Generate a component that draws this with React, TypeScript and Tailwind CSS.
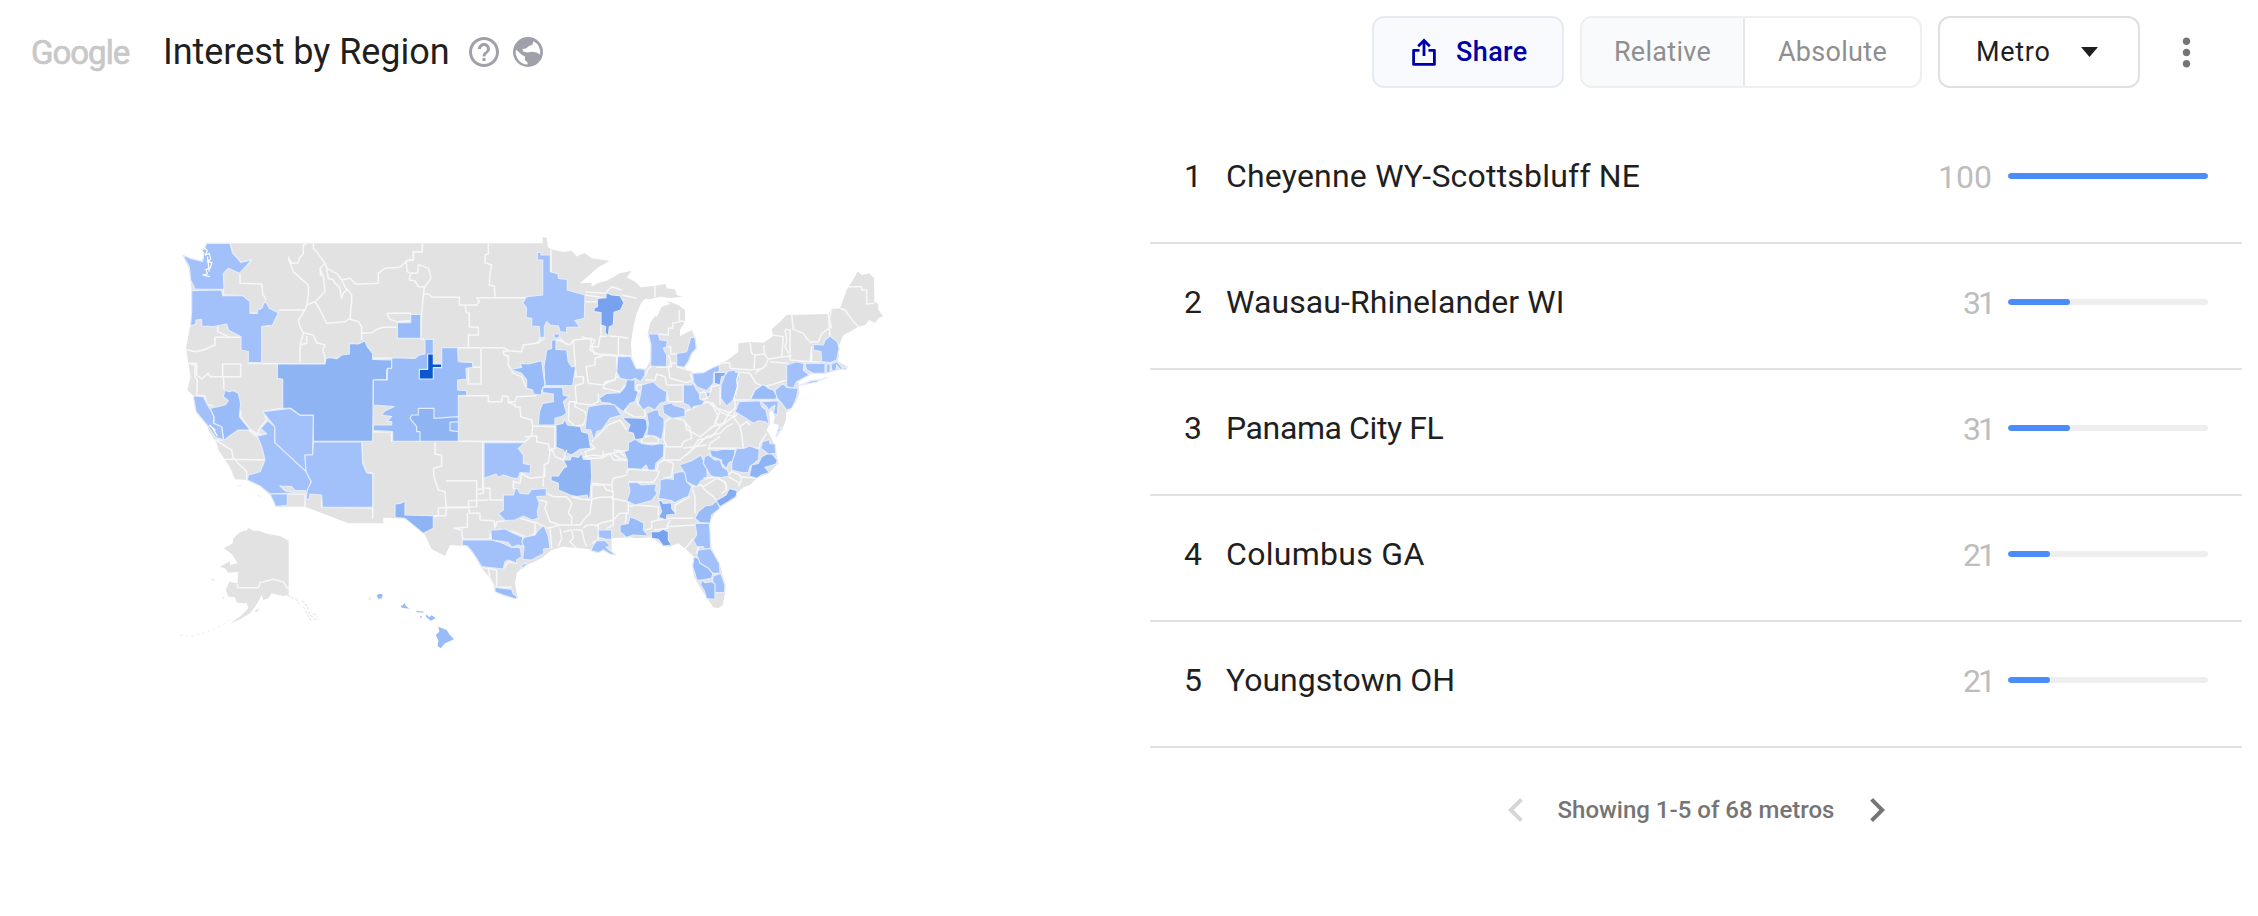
import React from 'react';
import { MdChevronLeft, MdChevronRight, MdHelpOutline, MdMoreVert } from 'react-icons/md';

const regions = [
  { name: 'Cheyenne WY-Scottsbluff NE', value: 100, fit: 'tracking-[0.2px]', valueFit: 'mr-[16px]' },
  { name: 'Wausau-Rhinelander WI', value: 31, fit: 'tracking-[0.08px]', valueFit: 'mr-[15px] tracking-[-3px]' },
  { name: 'Panama City FL', value: 31, fit: 'tracking-[-0.4px]', valueFit: 'mr-[15px] tracking-[-3px]' },
  { name: 'Columbus GA', value: 21, fit: 'tracking-[0.3px]', valueFit: 'mr-[15px] tracking-[-3px]' },
  { name: 'Youngstown OH', value: 21, fit: 'tracking-normal', valueFit: 'mr-[15px] tracking-[-3px]' },
];

const LIGHT = '#a2c0fa';
const MID = '#99bbf7';
const STRONG = '#8fb4f4';
const DEEP = '#85acf2';
const DARK = '#78a2ee';
const TOP = '#0b57d0';

type Sheet = {
  id: string;
  x: number;
  y: number;
  land?: string[];
  borders: string;
  metros: [string, string][];
};

// Each sheet holds one part of the country, with its own origin
const sheets: Sheet[] = [
  {
    id: 'west',
    x: 0,
    y: 0,
    borders:
      'M180 40 188 70 212 97 245 90 225 112 M210 132 210 160 275 162 278 190 288 210 M160 178 160 195 215 197 235 212 240 250 262 250 M355 80 365 100 385 98 388 85 400 70 400 45 410 40 M355 85 370 125 392 145 415 165 415 195 410 225 405 240 385 270 390 290 400 310 390 345 390 398 M325 240 405 240 M275 290 308 285 M430 40 430 55 440 65 465 100 450 115 460 140 465 185 435 215 410 225 M465 100 470 115 500 130 515 150 540 145 558 163 625 160 625 130 645 115 690 112 705 98 715 90 730 90 730 65 757 65 757 40 M515 150 530 180 520 190 515 205 508 170 495 160 490 150 475 145 470 115 M450 115 452 138 M530 175 545 195 545 215 540 265 525 275 470 280 450 240 435 215 M540 268 565 275 575 290 575 310 605 308 620 298 640 292 680 292 M575 310 575 330 M400 308 430 315 440 338 465 345 458 360 465 380 465 402 M410 318 410 340 390 345 M650 250 722 250 722 272 680 275 660 268 650 250 M45 358 75 365 100 360 135 345 135 322 212 322 M75 270 75 285 M95 270 97 288 M143 285 143 305 175 320 M55 400 80 400 80 435 95 447 115 430 120 440 158 440 158 402 212 402 212 440 160 440 162 478 M235 400 465 402 M62 404 75 404 75 440 82 450 80 495 105 498 110 522 130 528 M212 540 212 560 240 598 262 612 290 614 M335 535 280 545 290 570 270 595 262 612 M160 630 185 612 205 600 235 600 262 620 282 660 285 690 165 688 M135 630 160 630 M140 632 185 660 190 685 230 725 230 750 M455 795 455 832 608 834 608 866 M405 795 405 830 M352 792 405 792 M608 605 665 605 665 636 M575 636 578 700 590 728 608 730 608 832',
    metros: [
      [LIGHT, '38,75 60,85 98,94 102,70 96,60 104,56 110,40 180,40 188,70 200,82 212,97 245,90 225,112 208,130 175,115 160,130 162,178 75,178 62,150 58,110'],
      [LIGHT, '65,182 155,180 158,197 218,197 240,215 240,250 262,250 262,240 275,235 285,212 298,235 325,248 308,285 275,290 275,398 235,398 235,365 213,360 213,320 175,300 170,282 130,290 95,288 95,268 78,270 78,282 62,288 65,240'],
      [STRONG, '322,402 465,402 468,385 480,382 500,386 515,375 538,372 538,340 565,342 585,332 592,350 608,370 608,388 665,390 665,415 650,420 650,448 610,450 608,634 430,634 430,556 390,556 362,535 338,535 338,448 322,445'],
      [LIGHT, '278,545 360,535 390,556 430,556 428,675 405,675 408,725 314,638 314,590'],
      [LIGHT, '293,572 314,590 314,638 408,725 424,755 412,790 350,790 300,792 270,768 232,750 235,735 270,725 285,690 275,650 262,618 290,612 272,595'],
      [LIGHT, '300,792 352,792 352,825 318,830'],
      ['#e2e2e2', '330,768 365,770 375,782 408,782 408,790 380,790 345,782'],
      [LIGHT, '430,636 575,636 578,700 590,728 608,732 608,832 457,832 455,795 420,792 418,808 408,808 412,780 424,755 408,725 405,675 428,675'],
      [MID, '165,480 175,485 190,482 205,490 212,520 208,560 240,600 205,600 175,620 162,632 155,590 132,580 132,560 120,535 165,525 175,512 160,500'],
      [LIGHT, '70,498 100,500 110,520 125,545 132,560 130,580 155,590 160,630 135,620 115,590 78,545'],
    ],
  },
  {
    id: 'central',
    x: 600,
    y: 0,
    borders:
      'M157 40 157 65 130 65 130 90 108 92 112 125 122 130 118 150 135 153 145 170 165 170 183 145 175 115 145 103 143 130 122 130 M163 170 160 200 155 250 152 325 M152 328 162 328 M108 388 M10 385 65 385 M160 192 175 192 188 202 268 202 268 225 320 225 328 215 320 203 468 203 M355 40 355 72 345 75 345 98 365 105 360 130 358 165 373 168 375 200 M285 228 290 248 298 250 298 290 325 292 325 315 295 315 295 352 M263 353 330 353 M333 353 333 462 295 462 295 415 M330 412 308 412 M333 353 400 353 418 363 400 363 402 375 415 378 415 405 430 430 455 440 470 475 M415 362 455 365 460 345 508 338 510 322 M265 497 355 497 355 515 395 515 398 497 415 500 415 518 435 525 435 530 450 532 452 560 485 570 488 590 485 618 465 635 265 634 M415 515 435 515 440 500 500 497 M488 588 555 590 555 655 540 660 M465 620 500 618 500 635 535 642 540 665 535 698 522 705 525 742 M545 655 555 680 580 690 M195 636 195 672 215 676 215 708 190 715 192 740 205 780 225 785 228 830 M228 752 320 752 320 830 228 832 M338 636 338 775 M645 215 680 215 M525 325 500 338 M558 328 600 345 610 330 665 325 660 360 690 375 745 378 M570 325 590 345 M608 467 608 440 618 438 615 395 610 330 M612 440 640 440 640 460 615 467 M655 460 700 465 732 448 M655 460 648 410 675 405 675 385 700 378 M615 467 620 520 665 525 685 515 685 490 M597 515 595 570 615 588 640 585 650 560 645 545 615 530 615 515 597 515',
    metros: [
      [MID, '82,278 122,278 122,253 152,253 152,325 82,325'],
      [MID, '10,450 52,450 52,415 65,415 65,383 135,385 148,375 165,372 165,328 190,328 190,400 215,400 215,353 263,353 265,395 308,398 308,412 288,415 290,447 263,450 263,480 290,482 290,495 265,497 265,634 68,634 68,605 10,602 10,585 65,585 65,575 50,575 65,560 35,555 45,542 72,530 10,525'],
      [STRONG, '145,535 192,535 192,565 265,560 265,575 240,577 240,602 265,605 265,634 150,634 150,605 140,605 140,590 120,565 125,555 145,555'],
      [TOP, '173,372 190,372 190,402 215,402 215,413 190,413 190,447 148,447 148,418 173,418'],
      [LIGHT, '502,67 513,67 513,75 541,75 541,125 565,132 565,145 592,148 592,180 645,195 643,265 615,272 630,292 590,292 590,308 570,305 565,288 540,285 530,275 523,290 523,322 510,322 508,290 485,288 485,265 468,263 470,235 458,218 470,200 518,195 518,90 502,90'],
      [LIGHT, '552,312 570,312 566,324 552,324'],
      [MID, '545,330 558,330 558,358 590,360 595,395 605,410 617,410 608,467 525,467 522,410 530,360 545,355'],
      [MID, '420,418 455,412 450,400 475,402 515,392 520,430 525,465 515,482 515,495 490,492 488,480 470,475 470,450 455,430'],
      [MID, '518,472 578,472 580,495 597,500 580,515 590,550 575,560 555,565 555,585 505,585 508,545 518,520 550,515 550,492 518,488'],
      [STRONG, '558,585 578,580 585,568 592,585 632,590 635,605 655,610 662,655 630,658 605,675 592,670 590,688 580,660 558,652'],
      [STRONG, '580,690 600,690 605,678 625,682 635,668 640,688 663,688 665,740 660,800 652,808 652,795 620,800 600,795 565,780 565,760 543,752 543,738 565,738 580,715 590,710'],
      [LIGHT, '342,638 465,638 445,655 460,675 460,700 482,705 480,730 450,728 445,745 430,745 400,735 385,742 378,732 342,745'],
    ],
  },
  {
    id: 'south',
    x: 630,
    y: 660,
    borders:
      'M310 88 310 115 330 115 330 150 370 150 M290 118 310 118 310 130 290 132 M75 197 197 197 200 170 M175 173 262 173 M265 152 325 150 M265 152 268 190 300 190 300 210 342 212 345 235 M175 175 175 197 160 200 M262 190 262 232 222 235 245 240 248 265 247 285 M248 268 330 268 332 240 M345 235 350 215 375 212 M355 238 400 245 440 262 465 250 465 218 420 205 M400 90 400 115 412 118 M400 95 420 100 425 70 450 85 490 80 495 55 M490 85 490 110 M478 150 500 155 495 175 510 215 540 225 M500 130 520 140 560 140 575 160 565 190 575 200 575 225 M465 215 500 235 545 225 600 225 615 205 630 190 635 150 605 148 575 140 M510 235 515 295 M540 235 545 265 535 290 M550 245 575 240 580 265 570 275 590 295 M580 240 605 240 612 270 620 290 M610 235 620 225 655 225 655 268 635 280 M635 105 670 105 680 120 700 125 M635 148 660 142 700 140 700 225 680 235 M635 105 635 150 M325 355 350 360 350 410 M305 352 325 355 330 385 345 412 M370 357 385 335 410 340 M345 412 395 412 M560 0 550 30 M610 20 640 15 675 20 690 10 700 30 740 30 M700 0 745 5',
    metros: [
      [STRONG, '45,162 62,160 75,152 75,195 160,197 160,235 130,250 75,205 45,203'],
      [LIGHT, '370,135 400,135 405,118 412,115 420,130 445,132 455,118 500,115 498,138 470,140 478,160 472,185 475,205 455,210 430,198 405,210 375,212 355,190 370,180'],
      [LIGHT, '247,270 335,270 365,278 395,292 420,292 425,320 410,330 410,340 385,330 375,335 370,357 305,350 280,310 262,288 247,285'],
      [LIGHT, '332,240 350,240 375,236 400,250 428,262 430,290 415,285 395,292 385,278 370,275 335,270'],
      [LIGHT, '432,262 465,255 475,240 492,225 505,260 510,295 490,297 492,310 455,330 428,328 432,290 425,275'],
      [LIGHT, '425,345 440,335 438,345 428,355'],
      [MID, '345,412 395,418 400,432 412,440 408,447 375,437 345,425'],
      [LIGHT, '656,240 695,240 695,268 680,268 656,262'],
      [LIGHT, '640,285 650,272 675,272 690,287 678,292 708,315 690,312 670,300 655,308 632,302'],
    ],
  },
  {
    id: 'east',
    x: 1050,
    y: 0,
    borders:
      'M93 58 93 125 M196 195 230 200 258 203 M305 195 350 205 M195 185 255 190 275 170 305 180 M405 168 405 202 M268 318 300 320 325 325 M295 320 295 375 333 378 M215 350 235 350 240 320 262 318 M215 350 222 372 290 375 M243 285 243 320 M290 380 290 425 285 450 255 455 250 475 300 485 315 465 M315 450 300 442 285 440 M185 320 200 325 225 330 215 350 M325 520 315 545 345 562 375 560 375 540 352 520 350 495 358 480 M350 485 350 465 375 465 375 485 355 485 M415 312 445 315 445 295 458 295 458 280 480 275 M478 240 478 272 495 275 M442 350 452 350 452 372 470 372 M440 410 455 410 450 388 445 375 M375 440 385 415 410 400 410 412 450 412 450 400 480 400 M375 450 405 450 410 432 435 440 440 465 M445 412 450 445 500 458 518 450 510 430 M440 465 490 465 490 515 445 515 440 485 M495 545 540 525 565 515 580 530 595 560 580 590 540 620 500 598 495 575 M435 575 455 562 490 570 510 595 515 625 490 635 485 650 440 650 432 630 Z M560 605 575 590 610 580 625 555 645 560 660 540 M500 675 560 620 600 610 620 590 640 580 M490 655 560 645 M515 660 480 690 435 690 M435 648 432 690 415 700 410 720 M435 690 460 700 455 740 430 745 M565 658 570 640 600 620 M555 515 580 520 590 535 635 550 M570 490 575 470 600 465 M555 485 562 505 540 510 538 490 555 485 M215 635 265 585 300 570 320 600 M210 640 225 655 195 665 200 685 248 685 250 660 M248 675 300 665 315 680 M215 690 M365 640 365 625 395 615 415 625 415 640 370 640 M280 672 300 685 320 690 M322 718 415 722 M325 755 400 757 412 740 418 722 M322 720 320 735 300 740 280 745 275 765 215 760 M275 765 280 795 275 805 325 815 325 850 300 850 280 870 M280 800 280 870 240 880 225 890 M325 830 345 825 415 830 415 870 395 875 395 895 375 900 M320 850 315 885 M418 870 450 865 520 865 M450 870 440 890 525 885 M400 900 445 895 M515 770 525 800 525 850 M465 850 465 825 510 800 M515 770 545 765 555 780 580 800 590 815 M550 770 590 745 615 755 620 780 605 790 M625 740 660 760 M520 925 505 945 495 955 M535 950 530 970',
    metros: [
      [DARK, '258,187 275,195 300,197 312,218 302,240 282,247 280,285 268,290 265,318 255,308 257,290 243,285 243,248 222,245 222,235 232,230 232,205 258,203'],
      [LIGHT, '293,380 332,380 348,415 375,418 375,435 362,455 345,445 330,452 300,445 290,425'],
      [LIGHT, '385,312 415,312 420,330 442,332 440,350 430,355 440,375 440,410 392,408 393,345'],
      [LIGHT, '470,370 500,365 512,322 525,322 529,355 515,370 505,395 492,412 470,408'],
      [MID, '237,505 260,490 300,488 315,470 320,450 345,450 345,480 355,485 345,515 330,520 310,545 290,530 270,520 245,517'],
      [LIGHT, '205,530 255,522 285,525 300,550 315,552 270,565 245,600 230,605 222,632 212,600 195,598 200,555'],
      [LIGHT, '365,465 400,455 415,470 440,485 438,515 420,520 405,540 385,530 370,540 355,520 362,490'],
      [LIGHT, '518,430 550,428 580,412 598,405 598,425 582,430 580,460 560,482 530,470 520,455'],
      [DEEP, '583,427 617,427 615,438 605,440 600,465 583,460'],
      [LIGHT, '603,465 615,435 625,423 655,420 658,445 648,485 650,500 635,515 620,528 602,505'],
      [LIGHT, '490,465 515,465 515,452 530,480 538,490 540,508 555,512 545,525 520,530 515,540 505,525 490,520'],
      [LIGHT, '560,485 570,488 568,500 560,500'],
      [LIGHT, '428,525 455,518 460,525 495,535 495,560 455,565 430,550'],
      [LIGHT, '380,550 405,540 415,540 418,555 432,565 432,590 425,630 405,618 380,615 385,580'],
      [DEEP, '305,562 372,565 380,572 382,595 370,625 345,630 340,610 322,605 330,585'],
      [MID, '325,638 345,628 365,640 395,645 425,640 432,645 430,680 408,700 405,720 385,720 378,705 365,718 322,715 322,690 312,665 325,660'],
      [LIGHT, '420,750 440,745 460,748 460,730 480,725 500,725 505,760 515,770 505,800 490,805 465,818 455,812 415,805 420,775'],
      [LIGHT, '325,758 350,757 365,765 410,762 405,780 412,790 395,812 345,825 320,812 330,785'],
      [DEEP, '415,812 425,812 430,820 455,818 455,835 468,852 440,855 440,870 415,862 425,845'],
      [MID, '300,885 325,880 330,860 350,868 372,880 370,900 385,918 340,915 320,922 300,905'],
      [DARK, '393,905 415,905 430,898 445,905 445,930 455,945 430,948 415,928 395,925'],
      [LIGHT, '478,705 515,692 543,675 550,690 560,710 562,748 545,750 530,770 500,755 495,730'],
      [LIGHT, '550,700 553,680 565,675 585,690 600,690 608,712 622,720 628,738 590,745 570,735 562,720'],
      [MID, '568,660 590,662 605,658 645,658 642,690 625,700 620,715 605,700 605,690 575,680'],
      [MID, '535,845 555,828 575,825 590,812 600,835 575,855 570,880 540,878 525,865'],
      [LIGHT, '525,880 568,880 570,905 572,955 555,960 550,950 530,950 520,930 530,915'],
      [LIGHT, '535,960 572,955 598,1000 600,1030 578,1030 565,1015 540,1000 530,975'],
      [MID, '522,980 535,985 540,1000 565,1015 578,1030 575,1045 545,1050 530,1050 525,1030 518,1010'],
      [LIGHT, '578,1050 580,1038 602,1030 615,1065 614,1088 585,1088'],
      [MID, '545,1050 555,1058 575,1055 585,1062 585,1108 560,1106 552,1080 542,1065'],
    ],
  },
  {
    id: 'northeast',
    x: 1410,
    y: 0,
    borders:
      'M455 253 460 298 490 310 500 325 515 340 M435 298 450 300 450 370 450 390 510 395 515 350 M435 300 440 330 435 350 445 370 M565 252 570 318 M575 290 545 310 535 335 515 335 M575 240 568 265 575 295 M600 235 615 240 640 275 655 290 M625 170 665 170 665 180 680 180 680 222 703 220 M515 368 515 395 540 395 M240 398 270 398 270 415 M270 415 330 420 342 418 345 375 375 372 M330 338 335 370 345 375 M370 350 375 375 385 388 425 380 430 320 400 315 M370 345 375 350 M385 388 380 400 370 415 345 420 M425 380 455 378 M390 395 445 400 M345 430 380 405 M330 430 348 460 375 470 440 450 440 405 M285 425 330 430 M298 425 290 450 293 470 280 510 330 510 345 480 370 465 M330 510 415 510 M240 470 240 525 M215 520 240 545 260 555 285 535 285 510 M240 590 225 575 240 545 M240 590 280 560 300 590 320 575 330 585 M280 560 285 545 M310 655 305 610 300 590 M240 590 215 620 175 630 150 665 M310 655 358 655 360 640 380 610 M205 655 310 655 M250 570 M190 745 235 742 260 765 258 780 M265 735 275 725 300 735 305 750 295 770 M300 740 345 745 M110 410 160 425',
    metros: [
      [LIGHT, '440,405 470,395 492,400 490,420 508,435 490,445 470,455 460,475 440,470'],
      [LIGHT, '478,466 515,452 545,448 562,442 530,456'],
      [LIGHT, '495,400 555,400 555,430 520,430 500,420'],
      [LIGHT, '560,403 570,400 570,425 560,430'],
      [LIGHT, '573,403 590,395 600,405 608,415 622,410 618,418 600,418 590,405 588,422 575,422'],
      [LIGHT, '520,343 550,345 555,330 570,318 592,335 597,355 590,390 570,398 545,395 543,365 520,360'],
      [LIGHT, '405,480 430,460 440,472 475,475 470,500 465,515 455,535 440,540 425,520 408,500'],
      [MID, '332,508 345,480 370,463 385,475 400,480 410,498 408,508'],
      [LIGHT, '297,515 360,512 365,530 378,540 382,560 388,585 375,575 355,572 340,580 325,570 310,560 285,545'],
      [LIGHT, '362,515 415,512 412,555 400,550 405,525 385,540 380,530'],
      [LIGHT, '415,595 424,592 408,622'],
      [LIGHT, '275,720 275,700 290,655 310,655 330,648 358,658 355,690 330,710 325,728 305,728'],
      [STRONG, '365,680 380,672 395,670 412,690 408,702 375,712 388,728 365,735 350,745 328,738 335,705 355,700'],
      [LIGHT, '362,655 368,635 388,628 390,640 405,642 408,670 385,672'],
      [DEEP, '228,812 258,795 268,775 292,782 288,800 265,815 240,830'],
    ],
  },
  {
    id: 'pacific',
    x: 30,
    y: 810,
    land: [
      '205,83 220,92 240,93 255,100 280,105 300,108 326,122 326,285 310,288 275,280 265,295 250,300 245,285 232,310 210,340 180,358 150,372 185,345 205,325 200,310 170,308 165,292 145,290 137,270 148,245 172,250 175,215 145,218 135,205 120,200 150,183 150,195 172,190 158,165 132,145 158,130 160,115 178,98 190,92 200,92',
      '88,236 108,240 100,242',
      '125,292 135,292 130,296',
      '225,330 240,325 228,338',
    ],
    borders: 'M172 250 172 263 235 263 240 248 280 238 310 245 320 262 327 268',
    metros: [
      [MID, '590,286 598,281 608,283 606,295 595,297'],
      [MID, '565,299 572,292 570,298'],
      [MID, '662,316 668,317 673,308 678,318 688,326 665,323'],
      [MID, '708,332 732,335 728,338 710,336'],
      [MID, '720,347 727,350 722,355'],
      [MID, '738,343 748,352 755,346 767,355 752,362 738,350'],
      [MID, '775,380 800,390 808,403 822,418 795,430 782,445 773,438 775,420 767,405 778,395'],
    ],
  },
];

const mainland =
  'M38 75 60 85 98 94 102 70 96 60 110 40 1118 40 1118 20 1130 24 1134 52 1145 58 1180 66 1205 62 1222 80 1228 75 1245 70 1265 85 1300 90 1318 93 1285 112 1230 160 1265 158 1265 170 1285 158 1310 152 1350 130 1385 122 1370 142 1395 155 1412 172 1450 168 1487 162 1490 175 1515 178 1520 195 1538 200 1500 204 1470 200 1440 208 1425 206 1408 225 1378 275 1375 272 1405 205 1418 208 1400 250 1390 290 1383 340 1385 380 1398 415 1428 416 1442 390 1442 350 1433 312 1440 280 1455 258 1460 262 1475 230 1500 222 1490 212 1525 225 1545 240 1545 275 1530 300 1530 318 1565 300 1575 320 1579 355 1560 380 1542 412 1570 430 1600 428 1648 405 1680 385 1705 365 1705 340 1740 336 1780 338 1810 318 1805 298 1830 275 1850 255 1975 252 1985 237 2010 235 2018 212 2030 180 2052 145 2063 124 2075 135 2098 130 2112 145 2113 215 2125 222 2125 240 2140 258 2125 265 2115 280 2098 270 2085 285 2065 290 2040 305 2020 315 2010 340 2000 352 2007 375 2003 393 2032 410 2005 420 1970 430 1915 432 1885 455 1888 490 1878 515 1865 535 1848 548 1848 570 1838 595 1818 625 1826 585 1810 580 1815 560 1805 540 1798 545 1800 580 1790 600 1805 625 1818 665 1825 700 1798 728 1760 745 1740 765 1720 772 1700 790 1695 805 1650 830 1622 868 1615 890 1625 955 1650 1005 1665 1065 1665 1090 1658 1125 1645 1135 1630 1132 1612 1105 1595 1080 1572 1040 1567 1010 1572 980 1550 960 1525 940 1500 950 1480 948 1445 922 1400 925 1375 922 1325 925 1325 965 1300 960 1260 958 1230 955 1180 950 1145 960 1115 985 1060 1010 1040 1030 1035 1060 1043 1105 1005 1097 975 1082 960 1045 933 1012 910 970 892 948 875 947 840 945 825 978 785 958 765 915 705 865 640 863 640 880 535 880 405 830 318 830 300 795 270 768 232 750 195 748 180 712 145 660 140 640 115 600 110 580 78 545 70 498 52 480 62 440 55 400 48 355 60 290 65 240 65 180 58 120Z';

const UsMap = () => (
  <svg className="h-[430px] w-[720px]" viewBox="0 0 2160 1290" fill="none" strokeLinejoin="round">
    <path d={mainland} fill="#e2e2e2" />
    {sheets.map((sheet) => (
      <g key={sheet.id} transform={`translate(${sheet.x} ${sheet.y})`} stroke="#f6f7f9" strokeWidth="4.5">
        {sheet.land?.map((points) => (
          <polygon key={points} points={points} fill="#e2e2e2" stroke="none" />
        ))}
        <path d={sheet.borders} />
        {sheet.metros.map(([fill, points]) => (
          <polygon key={points} points={points} fill={fill} stroke={sheet.id === 'pacific' ? 'none' : '#e3ecfc'} strokeWidth="3.5" />
        ))}
      </g>
    ))}
    {/* Puget Sound */}
    <path d="M102 52 112 62 106 75 118 70 122 88 112 95 126 98 120 115 108 118 112 132 98 135 120 140 M112 80 118 125" stroke="#fff" strokeWidth="3.5" />
    {/* San Francisco Bay */}
    <path d="M118 585 135 600 128 595 142 618" stroke="#fff" strokeWidth="4" />
    {/* Aleutians and the panhandle */}
    <path d="M180 1170 150 1188 125 1200 90 1213 60 1219 30 1215" stroke="#efefef" strokeWidth="3" strokeDasharray="8 9" />
    <path d="M352 1096 378 1108 388 1122 M396 1112 412 1130 420 1155 440 1172 M400 1130 425 1175 M430 1150 442 1160" stroke="#e8e8e8" strokeWidth="4" strokeDasharray="9 4" />
    <path d="M200 768 215 767 M225 800 227 798 M262 795 272 800" stroke="#eeeeee" strokeWidth="3" />
  </svg>
);

const GlobeIcon = () => (
  <svg className="size-[30px]" viewBox="0 0 30 30">
    <circle cx="15" cy="15" r="15" fill="#a0a0aa" />
    <path d="M20.5 4.2A12.2 12.2 0 0 1 27 17.5L23.5 15.5 19 14.8 14.5 15.5 10 14.5 9.5 12 13 11.5 16 9 19.5 7.5Z" fill="#fff" />
    <path d="M3 12.5 9 18 12 19.5 12 23 14.5 25.5 14.5 27.5A12.3 12.3 0 0 1 3 12.5Z" fill="#fff" />
  </svg>
);

const ShareIcon = () => (
  <svg className="mr-5 h-7 w-6" viewBox="0 0 24 28" fill="none" stroke="currentColor" strokeWidth="2.8" strokeLinejoin="round">
    <path d="M7.5 12.4H1.6V26.4H22.4V12.4H16.5" />
    <path d="M12 18V3.5" />
    <path d="M6.2 8.2 12 2.4 17.8 8.2" strokeLinejoin="miter" />
  </svg>
);

const Header = () => (
  <header className="flex h-[104px] items-center pl-[31px] pr-[49px]">
    <span className="w-[132px] text-[33px] leading-none tracking-[-1px] text-[#c8c8c8] [-webkit-text-stroke:0.7px_#c8c8c8]">Google</span>
    <h1 className="w-[303px] whitespace-nowrap text-[36px] leading-none tracking-[-0.05px] text-[#1f1f1f]">Interest by Region</h1>
    <MdHelpOutline className="size-9 text-[#a0a0aa]" />
    <span className="ml-[11px]">
      <GlobeIcon />
    </span>

    <div className="ml-auto flex items-center gap-4">
      <button className="flex h-[72px] w-[192px] items-center rounded-xl border-2 border-[#e6eaf3] bg-[#f9fafe] pl-[38px] text-[27px] font-medium tracking-[0.4px] text-[#0000a8]">
        <ShareIcon />
        Share
      </button>
      <div className="flex h-[72px] w-[342px] overflow-hidden rounded-xl border-2 border-[#eeefef] text-[27px] tracking-[0.3px] text-[#8f8f8f]">
        <button className="w-[163px] border-r-2 border-[#e7e8ea] bg-[#f9fafb]">Relative</button>
        <button className="flex-1">Absolute</button>
      </div>
      <button className="flex h-[72px] w-[202px] items-center rounded-xl border-2 border-[#e0e0e0] pl-9 text-[27px] tracking-[0.7px] text-[#1f1f1f]">
        Metro
        <svg className="ml-[30px] h-[10px] w-[17px]" viewBox="0 0 17 10">
          <path d="M0 0H17L8.5 10Z" fill="currentColor" />
        </svg>
      </button>
      <button className="ml-2 text-[#757575]">
        <MdMoreVert className="size-[45px]" />
      </button>
    </div>
  </header>
);

const App = () => {
  return (
    <div className="h-[916px] w-[2258px] overflow-hidden bg-white font-[Roboto,sans-serif]">
      <Header />
      <main className="flex">
        <section className="w-[1150px] pl-[170px] pt-[126px]">
          <UsMap />
        </section>

        <section className="w-[1092px] pt-[14px]">
          {regions.map((region, i) => (
            <div key={region.name} className="flex h-[126px] items-center border-b-2 border-[#e2e2e2] pb-2 pl-[34px] pr-[34px] text-[32px] text-[#1f1f1f]">
              <span className="w-[42px]">{i + 1}</span>
              <span className={region.fit}>{region.name}</span>
              <span className={`ml-auto pt-[2px] text-[#bdbdbd] ${region.valueFit}`}>{region.value}</span>
              <div className="h-[6px] w-[200px] overflow-hidden rounded-full bg-[#eeeeee]">
                <div className="h-full rounded-full bg-[#4b8df8]" style={{ width: `${region.value}%` }} />
              </div>
            </div>
          ))}

          <div className="flex h-[124px] items-center justify-center">
            <MdChevronLeft className="size-12 text-[#d6d6d6]" />
            <span className="mx-[17px] w-[279px] whitespace-nowrap text-center text-[24px] font-medium text-[#757575]">Showing 1-5 of 68 metros</span>
            <MdChevronRight className="size-12 text-[#757575]" />
          </div>
        </section>
      </main>
    </div>
  );
};

export default App;
